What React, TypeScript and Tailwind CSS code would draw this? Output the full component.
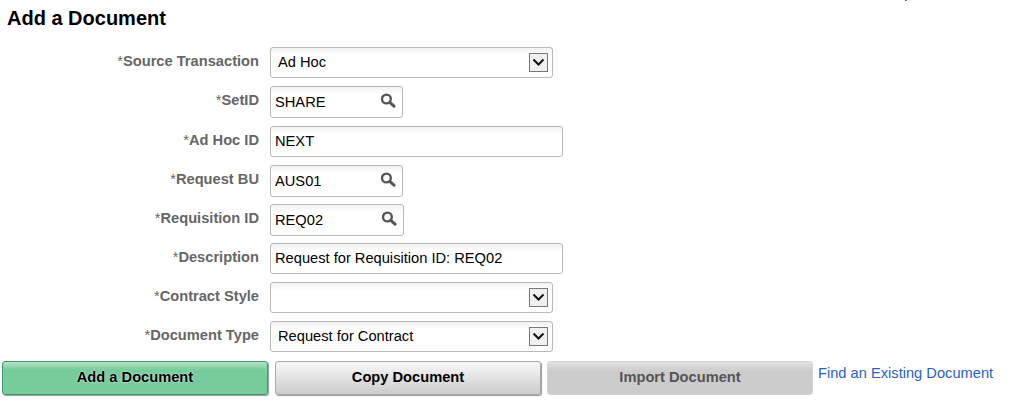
const ff = "font-['Liberation_Sans',Arial,sans-serif]";

function Search() {
  return (
    <svg width="16" height="15" viewBox="0 0 16 15" className="absolute right-[6px] top-[6px]">
      <circle cx="6.4" cy="6" r="4.4" fill="none" stroke="#555" strokeWidth="2.4" />
      <path d="M9.8 9.4 L14 13.2" stroke="#555" strokeWidth="3" strokeLinecap="round" />
    </svg>
  );
}

function Arrow() {
  return (
    <span className="absolute right-[4px] top-[5px] flex h-[19px] w-[19px] items-center justify-center border border-[#777] bg-[#f0f0f0]">
      <svg width="13" height="9" viewBox="0 0 13 9">
        <path d="M1.5 1.5 L6.5 6.5 L11.5 1.5" fill="none" stroke="#111" strokeWidth="2" />
      </svg>
    </span>
  );
}

const box =
  "relative flex items-center rounded-[3px] border border-[#b8b8b8] bg-white bg-gradient-to-b from-[#f1f1f1] to-white to-[25%] text-[14.67px] text-black";

const rows = [
  { label: "Source Transaction", kind: "select", value: "Ad Hoc", h: "h-[39px]" },
  { label: "SetID", kind: "lookup", value: "SHARE", w: "w-[133px]", h: "h-[40px]" },
  { label: "Ad Hoc ID", kind: "text", value: "NEXT", h: "h-[39px]" },
  { label: "Request BU", kind: "lookup", value: "AUS01", w: "w-[133px]", h: "h-[39px]" },
  { label: "Requisition ID", kind: "lookup", value: "REQ02", w: "w-[134px]", h: "h-[39px]" },
  { label: "Description", kind: "text", value: "Request for Requisition ID: REQ02", h: "h-[39px]" },
  { label: "Contract Style", kind: "select", value: "", h: "h-[39px]" },
  { label: "Document Type", kind: "select", value: "Request for Contract", h: "h-[39px]" },
];

function Field({ r }: { r: (typeof rows)[number] }) {
  if (r.kind === "select") {
    return (
      <div className={`${box} h-[31px] w-[283px] pb-[1px] pl-[7px]`}>
        {r.value}
        <Arrow />
      </div>
    );
  }
  if (r.kind === "lookup") {
    return (
      <div className={`${box} h-[32px] ${r.w} pb-[1px] pl-[4px]`}>
        {r.value}
        <Search />
      </div>
    );
  }
  return <div className={`${box} h-[31px] w-[293px] pb-[1px] pl-[4px]`}>{r.value}</div>;
}

function Btn({ children, cls }: { children: string; cls: string }) {
  return (
    <button className={`h-[34px] w-[266px] rounded-[3px] border pb-[2px] text-[14.67px] font-bold ${cls}`}>{children}</button>
  );
}

export default function App() {
  return (
    <div className={`${ff} relative h-[400px] w-[1009px] overflow-hidden bg-white`}>
      <span className="absolute left-[905px] top-0 h-[1px] w-[2px] bg-[#777]" />
      <h1 className="pl-[7px] pt-[7px] text-[20px] font-bold leading-[23px] text-black">Add a Document</h1>
      <div className="mt-[17px] flex flex-col">
        {rows.map((r) => (
          <div key={r.label} className={`flex ${r.h} items-start`}>
            <div className="w-[260px] pr-[1px] text-right text-[14.67px] font-bold leading-[28px] text-[#666]">
              <span className="font-normal">*</span>
              {r.label}
            </div>
            <div className="ml-[10px]">
              <Field r={r} />
            </div>
          </div>
        ))}
      </div>
      <div className="mt-[1px] flex items-start pl-[2px]">
        <Btn cls="border-[#3d9a68] bg-gradient-to-b from-[#b5e0c8] to-[#76cc9b] to-[25%] text-black shadow-[1px_1px_1px_#999] [text-shadow:0_0_2px_#ffffff]">Add a Document</Btn>
        <div className="ml-[7px]">
          <Btn cls="border-[#a8a8a8] bg-gradient-to-b from-[#f8f8f8] to-[#cccccc] text-black shadow-[1px_1px_1px_#999]">Copy Document</Btn>
        </div>
        <div className="ml-[6px]">
          <Btn cls="border-[#d4d4d4] bg-gradient-to-b from-[#e0e0e0] to-[#cccccc] to-[30%] text-[#555]">Import Document</Btn>
        </div>
        <a className="ml-[5px] text-[14.67px] leading-[25px] text-[#2a5fc9]">Find an Existing Document</a>
      </div>
    </div>
  );
}
